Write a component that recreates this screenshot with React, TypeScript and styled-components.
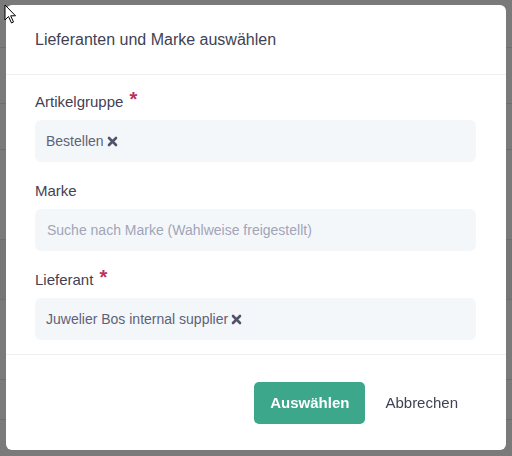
import styled, { createGlobalStyle } from "styled-components";

const GlobalStyle = createGlobalStyle`
  html, body {
    margin: 0;
    padding: 0;
  }
  body {
    font-family: "Liberation Sans", Arial, sans-serif;
    background: #ffffff;
    color: #3f4254;
  }
  * {
    box-sizing: border-box;
  }
`;

/* the page that sits under the dialog */
const SPage = styled.div`
  width: 512px;
  height: 456px;
  overflow: hidden;
  display: flex;
  flex-direction: column;
`;
const SPageRow = styled.div<{ $height: number; $shade?: string }>`
  height: ${({ $height }) => $height}px;
  border-bottom: 1px solid #e4e6ef;
  background: ${({ $shade }) => $shade || "#ffffff"};
`;

const SOverlay = styled.div`
  position: fixed;
  inset: 0;
  background: rgba(0, 0, 0, 0.52);
  display: flex;
  align-items: flex-start;
  padding: 5px 0 0 6px;
`;

const SDialog = styled.div`
  width: 500px;
  height: 445px;
  background: #ffffff;
  border-radius: 6px;
  display: flex;
  flex-direction: column;
`;
const SHeader = styled.div`
  height: 70px;
  padding: 0 29px;
  display: flex;
  align-items: center;
  border-bottom: 1px solid #eff0f3;
`;
const STitle = styled.h2`
  margin: 0;
  font-size: 16px;
  font-weight: 400;
  color: #3f4254;
`;
const SBody = styled.div`
  padding: 17px 29px 14px;
  display: flex;
  flex-direction: column;
  gap: 19px;
  border-bottom: 1px solid #eff0f3;
`;
const SField = styled.div`
  display: flex;
  flex-direction: column;
  gap: 8px;
`;
const SLabel = styled.label`
  height: 20px;
  line-height: 20px;
  font-size: 15px;
  color: #3f4254;
  display: flex;
  align-items: flex-start;
`;
const SRequired = styled.span`
  margin-left: 6px;
  color: #b8325a;
  font-size: 20px;
  line-height: 14px;
  font-weight: 700;
`;
const SInputBox = styled.div`
  height: 42px;
  width: 441px;
  background: #f4f7fa;
  border-radius: 6px;
  padding: 0 11px;
  display: flex;
  align-items: center;
  font-size: 14px;
`;
const STag = styled.span`
  display: inline-flex;
  align-items: center;
  gap: 3px;
  color: #5e6278;
`;
const SPlaceholder = styled.span`
  color: #a1a5b7;
  padding-left: 1px;
`;
const SFooter = styled.div`
  flex: 1;
  padding: 0 32px 0 0;
  display: flex;
  align-items: center;
  justify-content: flex-end;
  gap: 4px;
`;
const SButton = styled.button<{ $primary?: boolean }>`
  height: 42px;
  padding: 0 16px;
  border: none;
  border-radius: 5px;
  font-family: inherit;
  font-size: 15px;
  font-weight: ${({ $primary }) => ($primary ? 700 : 400)};
  background: ${({ $primary }) => ($primary ? "#3ca78b" : "transparent")};
  color: ${({ $primary }) => ($primary ? "#ffffff" : "#3f4254")};
  cursor: pointer;
`;

const SPointer = styled.svg`
  position: fixed;
  left: 4px;
  top: 4px;
`;

function RemoveIcon() {
  return (
    <svg width="11" height="11" viewBox="0 0 11 11">
      <path
        d="M2 2 L9 9 M9 2 L2 9"
        stroke="#50536a"
        strokeWidth="2.6"
        strokeLinecap="round"
      />
    </svg>
  );
}

function Tag({ text }: { text: string }) {
  return (
    <STag>
      {text}
      <RemoveIcon />
    </STag>
  );
}

export default function App() {
  return (
    <>
      <GlobalStyle />
      <SPage>
        <SPageRow $height={48} />
        <SPageRow $height={56} />
        <SPageRow $height={46} />
        <SPageRow $height={90} />
        <SPageRow $height={60} $shade="#f7f7f9" />
        <SPageRow $height={80} />
        <SPageRow $height={40} />
      </SPage>
      <SOverlay>
        <SDialog>
          <SHeader>
            <STitle>Lieferanten und Marke auswählen</STitle>
          </SHeader>
          <SBody>
            <SField>
              <SLabel>
                Artikelgruppe<SRequired>*</SRequired>
              </SLabel>
              <SInputBox>
                <Tag text="Bestellen" />
              </SInputBox>
            </SField>
            <SField>
              <SLabel>Marke</SLabel>
              <SInputBox>
                <SPlaceholder>Suche nach Marke (Wahlweise freigestellt)</SPlaceholder>
              </SInputBox>
            </SField>
            <SField>
              <SLabel>
                Lieferant<SRequired>*</SRequired>
              </SLabel>
              <SInputBox>
                <Tag text="Juwelier Bos internal supplier" />
              </SInputBox>
            </SField>
          </SBody>
          <SFooter>
            <SButton $primary>Auswählen</SButton>
            <SButton>Abbrechen</SButton>
          </SFooter>
        </SDialog>
      </SOverlay>
      <SPointer width="14" height="22" viewBox="0 0 14 22">
        <path
          d="M1 1 L1 16 L4.5 12.5 L7.5 19 L9.5 18 L6.7 11.8 L11.5 11.8 Z"
          fill="#ffffff"
          stroke="#000000"
          strokeWidth="1"
          strokeLinejoin="miter"
        />
      </SPointer>
    </>
  );
}
